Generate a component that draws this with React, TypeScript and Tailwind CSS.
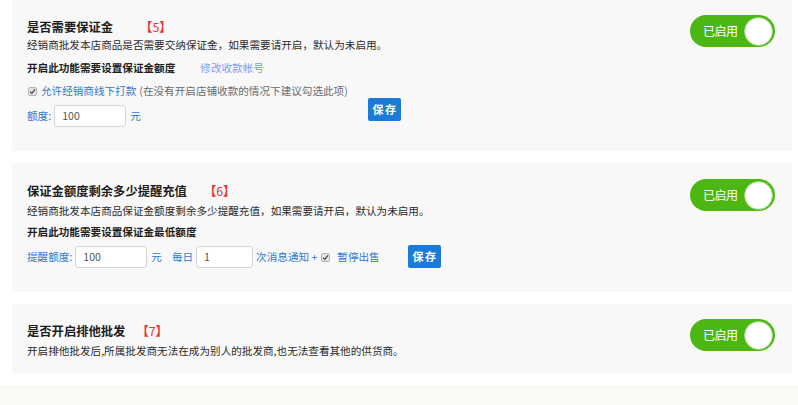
import React from 'react';

const font = { fontFamily: '"Noto Sans CJK SC", "Noto Sans", sans-serif' };

const Toggle: React.FC<{ top: string }> = ({ top }) => {
  return <div className={`shrink-0 mr-[17px] ${top} w-[85px] h-[32px] rounded-full bg-[#4cb712] flex items-center justify-between pl-[13px] pr-[2px]`}>
      <span className="text-white text-[12px] leading-none tracking-[-0.5px]">已启用</span>
      <span className="w-[29px] h-[29px] rounded-full bg-white border border-[#8fd66a]"></span>
    </div>;
};

const Check: React.FC = () => {
  return <span className="inline-flex items-center justify-center w-[9px] h-[9px] rounded-[2px] border border-[#b5b5b5] bg-[#e3e3e3]">
      <svg width="7" height="7" viewBox="0 0 8 8">
        <path d="M1.2 4.2 L3.2 6.1 L6.8 1.6" fill="none" stroke="#444" strokeWidth="1.4" />
      </svg>
    </span>;
};

const Input: React.FC<{ value: string; w: string }> = ({ value, w }) => {
  return <div className={`${w} h-[22px] bg-white border border-[#d4d4d4] rounded-[3px] px-[7px] flex items-center text-[10.6px] text-[#555]`}>
      {value}
    </div>;
};

const SaveBtn: React.FC = () => {
  return <button className="w-[33px] h-[23px] rounded-[2px] bg-[#1a7bd9] text-white text-[11px] font-bold tracking-[1.5px] leading-none pl-[1px]">
      保存
    </button>;
};

const Title: React.FC<{ text: string; num: string; gap: string }> = ({ text, num, gap }) => {
  return <div className="h-[18px] flex items-center">
      <span className="text-[12.3px] font-bold text-[#1e1e1e]">{text}</span>
      <span className={`${gap} text-[12.3px] text-[#e8332f] font-bold`}>【<span className="font-normal">{num}</span>】</span>
    </div>;
};

export default function App() {
  return <div className="min-h-[405px] bg-white" style={font}>
      <div className="pl-3 pr-1.5 flex flex-col gap-3">
        {/* card 5 */}
        <div className="bg-[#f8f8f8] flex">
          <div className="flex-1 pl-[15px] pt-[18px] pb-[24px]">
            <Title text="是否需要保证金" num="5" gap="ml-[27px]" />
            <div className="h-[18px] flex items-center text-[10.6px] text-[#2b2b2b]">经销商批发本店商品是否需要交纳保证金，如果需要请开启，默认为未启用。</div>
            <div className="mt-[5px] h-[18px] flex items-center text-[10.6px]">
              <span className="font-bold text-[#1e1e1e]">开启此功能需要设置保证金额度</span>
              <span className="ml-[25px] text-[#7b9ef3]">修改收款帐号</span>
            </div>
            <div className="mt-[5px] h-[18px] flex items-center text-[10.6px] pl-[1px]">
              <Check />
              <span className="ml-[4px] text-[#2e7bd3]">允许经销商线下打款</span>
              <span className="ml-[3px] text-[#6b6b6b]">(在没有开启店铺收款的情况下建议勾选此项)</span>
            </div>
            <div className="mt-[-2px] flex items-start">
              <div className="w-[341px] mt-[7px] flex items-center text-[10.6px] text-[#2e7bd3]">
                <span>额度:</span>
                <div className="ml-[3px]"><Input value="100" w="w-[72px]" /></div>
                <span className="ml-[4px]">元</span>
              </div>
              <SaveBtn />
            </div>
          </div>
          <Toggle top="mt-[15px]" />
        </div>

        {/* card 6 */}
        <div className="bg-[#f8f8f8] flex">
          <div className="flex-1 pl-[15px] pt-[19px] pb-[24px]">
            <Title text="保证金额度剩余多少提醒充值" num="6" gap="ml-[17px]" />
            <div className="mt-[2px] h-[18px] flex items-center text-[10.6px] text-[#2b2b2b]">经销商批发本店商品保证金额度剩余多少提醒充值，如果需要请开启，默认为未启用。</div>
            <div className="mt-[3px] h-[18px] flex items-center text-[10.6px]">
              <span className="font-bold text-[#1e1e1e]">开启此功能需要设置保证金最低额度</span>
            </div>
            <div className="mt-[4px] flex items-start">
              <div className="w-[381px] mt-[1px] flex items-center text-[10.6px] text-[#2e7bd3]">
                <span>提醒额度:</span>
                <div className="ml-[3px]"><Input value="100" w="w-[72px]" /></div>
                <span className="ml-[4px]">元</span>
                <span className="ml-[10px]">每日</span>
                <div className="ml-[3px]"><Input value="1" w="w-[57px]" /></div>
                <span className="ml-[3px]">次消息通知 +</span>
                <span className="ml-[4px] flex"><Check /></span>
                <span className="ml-[7px]">暂停出售</span>
              </div>
              <SaveBtn />
            </div>
          </div>
          <Toggle top="mt-[16px]" />
        </div>

        {/* card 7 */}
        <div className="bg-[#f8f8f8] flex">
          <div className="flex-1 pl-[15px] pt-[18px] pb-[14px]">
            <Title text="是否开启排他批发" num="7" gap="ml-[11px]" />
            <div className="mt-[2px] h-[18px] flex items-center text-[10.6px] text-[#2b2b2b]">开启排他批发后,所属批发商无法在成为别人的批发商,也无法查看其他的供货商。</div>
          </div>
          <Toggle top="mt-[15px]" />
        </div>
      </div>
      <div className="mt-[11px] h-[20px] bg-[#f9f9f5]"></div>
    </div>;
}
